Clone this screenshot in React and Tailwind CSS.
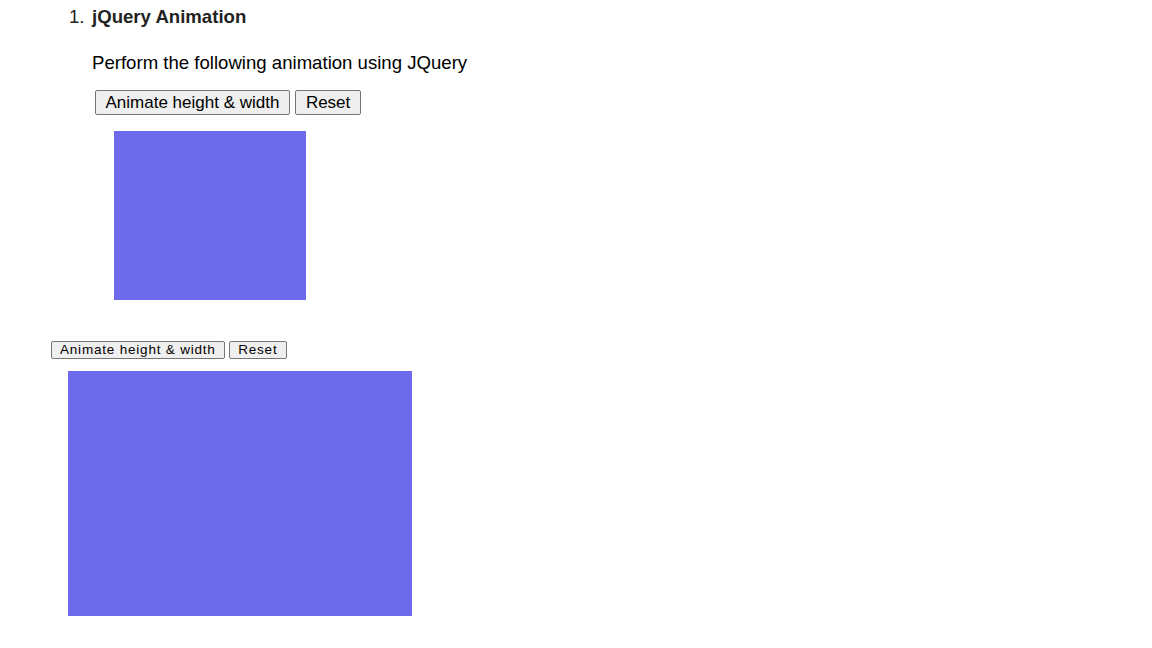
export default function App() {
  const font = { fontFamily: '"Liberation Sans", Arial, sans-serif' };
  return (
    <div className="w-[1152px] h-[648px] bg-white text-black overflow-hidden" style={font}>
      <div className="pl-[69px] pt-[6px] flex items-baseline text-[18.6px] leading-[22px] text-[#222]">
        <span className="w-[23px]">1.</span>
        <span className="font-bold">jQuery Animation</span>
      </div>
      <div className="pl-[92px] pt-[24px] text-[18.6px] leading-[22px]">
        Perform the following animation using JQuery
      </div>
      <div className="pl-[95px] pt-[16px] flex gap-[5px]">
        <button className="h-[25px] px-[9.5px] bg-[#efefef] border border-[#767676] rounded-[2px] text-[17px] leading-[20px]">
          Animate height &amp; width
        </button>
        <button className="h-[25px] px-[10px] bg-[#efefef] border border-[#767676] rounded-[2px] text-[17px] leading-[20px]">
          Reset
        </button>
      </div>
      <div className="pl-[114px] pt-[16px]">
        <div className="w-[192px] h-[169px] bg-[#6d6bec]" />
      </div>
      <div className="pl-[51px] pt-[41px] flex gap-[4px]">
        <button className="h-[18px] px-[8px] bg-[#efefef] border border-[#767676] rounded-[2px] text-[13.5px] leading-[16px] tracking-[0.8px]">
          Animate height &amp; width
        </button>
        <button className="h-[18px] px-[8.5px] bg-[#efefef] border border-[#767676] rounded-[2px] text-[13.5px] leading-[16px] tracking-[0.8px]">
          Reset
        </button>
      </div>
      <div className="pl-[68px] pt-[12px]">
        <div className="w-[344px] h-[245px] bg-[#6d6bec]" />
      </div>
    </div>
  );
}
